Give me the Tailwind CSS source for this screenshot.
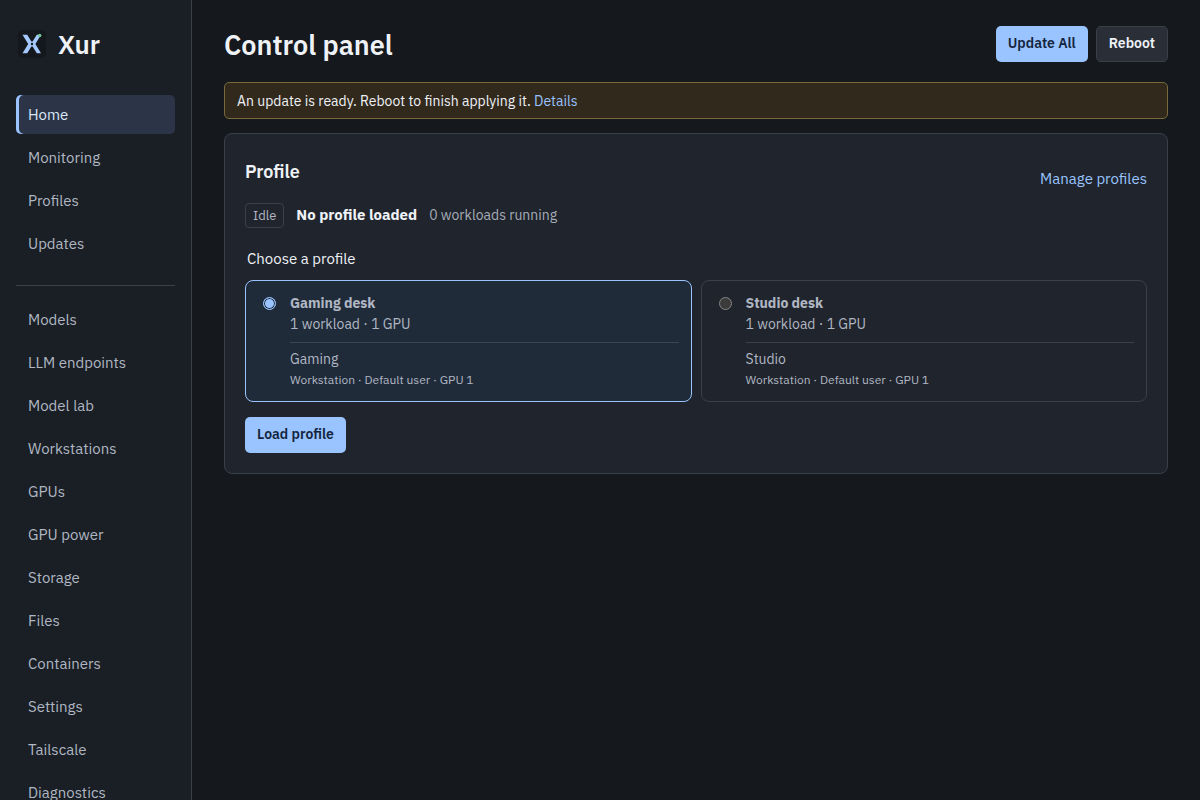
<!DOCTYPE html>
<html lang="en">
<head>
<meta charset="utf-8">
<meta name="viewport" content="width=device-width, initial-scale=1">
<title>Xur – Control panel</title>
<script src="https://cdn.jsdelivr.net/npm/@tailwindcss/browser@4"></script>
</head>
<body class="bg-[#15181c] font-['IBM_Plex_Sans',Roboto,sans-serif] text-[15px] leading-[23px] text-[#eef2f7]">
<div class="flex h-screen">
  <aside class="w-48 shrink-0 overflow-x-hidden overflow-y-auto border-r border-[#3a404a] bg-[#1a1f25] px-4 pt-6 [scrollbar-width:none]">
    <a href="#" class="flex h-10 items-center gap-3 px-0.5 text-[26px] font-semibold">
      <svg class="size-7" viewBox="0 0 28 28" aria-hidden="true">
        <rect width="28" height="28" rx="5" fill="#14181c"/>
        <path d="M4.500 4.800h4.700l4.200 6.700h1.200l4.200-6.700h4.200l-5.600 9.200 5.600 9.200h-4.200L14.600 16.500h-1.200L9.200 23.200H4.500l5.700-9.200z" fill="#a5c8ff"/>
        <circle cx="14" cy="14" r="1.200" fill="#14181c"/>
        <circle cx="21.700" cy="5.500" r="1.700" fill="#70c79a"/>
      </svg>
      <span>Xur</span>
    </a>
    <nav class="mt-[31px] text-[#b0b7c3]" aria-label="Main">
      <div class="flex flex-col gap-1 border-b border-[#3a404a] pb-[22px]">
        <a href="#" aria-current="page" class="rounded-[5px] bg-[#2b3547] px-3 py-2 text-[#dbe6f7] shadow-[inset_3px_0_0_#99c4ff]">Home</a>
        <a href="#" class="px-3 py-2">Monitoring</a>
        <a href="#" class="px-3 py-2">Profiles</a>
        <a href="#" class="px-3 py-2">Updates</a>
      </div>
      <div class="mt-[14px] flex flex-col gap-1">
        <a href="#" class="px-3 py-2">Models</a>
        <a href="#" class="px-3 py-2">LLM endpoints</a>
        <a href="#" class="px-3 py-2">Model lab</a>
        <a href="#" class="px-3 py-2">Workstations</a>
        <a href="#" class="px-3 py-2">GPUs</a>
        <a href="#" class="px-3 py-2">GPU power</a>
        <a href="#" class="px-3 py-2">Storage</a>
        <a href="#" class="px-3 py-2">Files</a>
        <a href="#" class="px-3 py-2">Containers</a>
        <a href="#" class="px-3 py-2">Settings</a>
        <a href="#" class="px-3 py-2">Tailscale</a>
        <a href="#" class="px-3 py-2">Diagnostics</a>
      </div>
    </nav>
  </aside>
  <main class="min-w-0 flex-1 overflow-auto px-8 pt-6">
    <header class="flex h-10 items-center justify-between">
      <h1 class="pt-0.5 text-[27px] leading-10 font-semibold">Control panel</h1>
      <div class="flex gap-2 text-sm leading-5 font-semibold">
        <button class="h-9 rounded-[5px] bg-[#99c4ff] px-3 pb-0.5 text-[#14243d]">Update All</button>
        <button class="h-9 rounded-[5px] border border-[#3a404a] bg-[#292e37] px-3 pb-0.5">Reboot</button>
      </div>
    </header>
    <div role="status" class="mt-[18px] rounded-[5px] border border-[#78683a] bg-[#32291d] px-3 pt-[9px] pb-[7px] text-sm leading-[19px]">An update is ready. Reboot to finish applying it. <a href="#" class="text-[#99c4ff]">Details</a></div>
    <section class="mt-[14px] rounded-lg border border-[#3a404a] bg-[#20242c] p-5">
      <div class="flex items-center justify-between pt-1">
        <h2 class="pb-2 text-lg leading-7 font-semibold">Profile</h2>
        <a href="#" class="pt-1 text-[#99c4ff]">Manage profiles</a>
      </div>
      <div class="mt-[9px] flex items-center gap-3">
        <span class="rounded-[4px] border border-[#3a404a] px-[7px] text-[13px] text-[#b0b7c3]">Idle</span>
        <strong class="pb-0.5 font-bold">No profile loaded</strong>
        <span class="pb-0.5 text-sm text-[#a5acb8]">0 workloads running</span>
      </div>
      <form>
        <fieldset class="mt-[19px]">
          <legend class="px-0.5">Choose a profile</legend>
          <div class="mt-[10px] grid grid-cols-2 gap-[9px] text-sm leading-[21px] text-[#b0b7c3]">
            <label for="gaming" class="flex gap-[14px] rounded-lg border border-[#99c4ff] bg-[#202b3a] pt-3 pr-3 pb-[11px] pl-[17px]">
              <input id="gaming" type="radio" name="profile" checked class="mt-1 size-[13px] shrink-0 appearance-none rounded-full border border-[#99c4ff] bg-[#99c4ff] ring-1 ring-[#202b3a] ring-inset">
              <span class="flex flex-1 flex-col">
                <b class="font-bold">Gaming desk</b>
                <span>1 workload · 1 GPU</span>
                <span class="mt-[7px] border-t border-[#3a4655] pt-[6px]">Gaming</span>
                <span class="text-xs leading-5">Workstation · Default user · GPU 1</span>
              </span>
            </label>
            <label for="studio" class="flex gap-[14px] rounded-lg border border-[#3a404a] pt-3 pr-3 pb-[11px] pl-[17px]">
              <input id="studio" type="radio" name="profile" class="mt-1 size-[13px] shrink-0 appearance-none rounded-full border border-[#858585] bg-[#3b3b3b]">
              <span class="flex flex-1 flex-col">
                <b class="font-bold">Studio desk</b>
                <span>1 workload · 1 GPU</span>
                <span class="mt-[7px] border-t border-[#3a404a] pt-[6px]">Studio</span>
                <span class="text-xs leading-5">Workstation · Default user · GPU 1</span>
              </span>
            </label>
          </div>
        </fieldset>
        <button type="button" class="mt-[15px] block h-9 rounded-[5px] bg-[#99c4ff] px-3 pb-0.5 text-sm font-semibold text-[#14243d]">Load profile</button>
      </form>
    </section>
  </main>
</div>
</body>
</html>
